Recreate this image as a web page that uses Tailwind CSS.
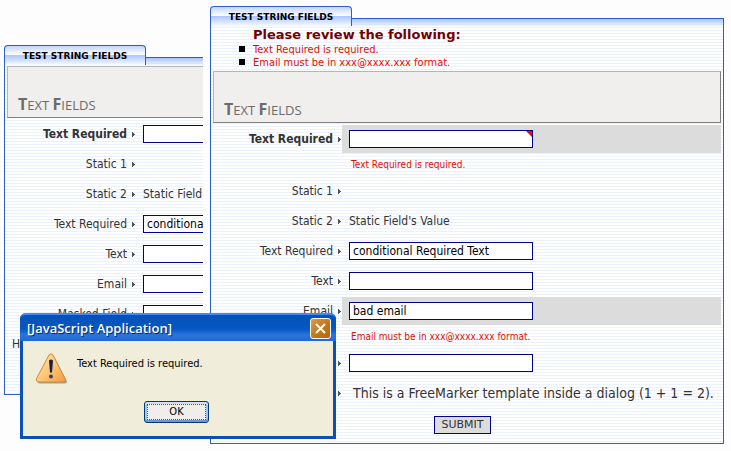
<!DOCTYPE html>
<html lang="en">
<head>
<meta charset="utf-8">
<title>Test String Fields</title>
<script src="https://cdn.jsdelivr.net/npm/@tailwindcss/browser@4"></script>
</head>
<body class="bg-[#fdfdfd] font-['DejaVu_Sans_Condensed','DejaVu_Sans',sans-serif] text-[12px] leading-4 text-[#333]">
<svg class="hidden"><defs><symbol id="arrow" viewBox="0 0 3 5"><path d="M0 0h1v1h1v1h1v1h-1v1h-1v1h-1z" fill="#555" shape-rendering="crispEdges"/></symbol></defs></svg>
<main class="flex items-start gap-[7px] pl-1 pr-[7px]">

  <section class="w-[199px] shrink-0 overflow-hidden pt-[45px]">
    <h2 class="relative -mb-2 flex h-5 w-[142px] items-center justify-center rounded-t-[4px] border border-b-0 border-[#2a5fc4] bg-[linear-gradient(#c3d5fb_0,#fff_9px,#aac6ff_9px,#fff_20px)] font-['DejaVu_Sans',sans-serif] text-[9px] font-bold text-black">TEST STRING FIELDS</h2>
    <form class="w-[514px] border border-[#2a5fc4] bg-[linear-gradient(#a9c4fb_0,#fff0_8px),repeating-linear-gradient(#fff_0_2px,#ebf2fe_2px_3px)] px-[2px] pb-[35px] pt-2">
      <h3 class="mb-px flex h-[52px] items-end border border-b-[#7f7f7f] border-l-[#b5b5b5] border-r-[#7f7f7f] border-t-[#b5b5b5] bg-[#f0efed] pb-[2px] pl-[10px] font-['Open_Sans',sans-serif] text-[13px] uppercase leading-5 text-[#6b6b6b]"><span><b class="text-[16px]">T</b>ext <b class="text-[16px]">F</b>ields</span></h3>
      <div class="flex h-[30px] items-center"><label for="a1" class="w-[120px] text-right font-bold">Text Required</label><svg class="ml-[5px] mr-[8px] h-[5px] w-[3px]"><use href="#arrow"/></svg><input id="a1" class="h-[18px] w-[184px] border border-[#000090] bg-white px-[3px] text-black"></div>
      <div class="flex h-[30px] items-center"><span class="w-[120px] text-right">Static 1</span><svg class="ml-[5px] mr-[8px] h-[5px] w-[3px]"><use href="#arrow"/></svg></div>
      <div class="flex h-[30px] items-center"><span class="w-[120px] text-right">Static 2</span><svg class="ml-[5px] mr-[8px] h-[5px] w-[3px]"><use href="#arrow"/></svg><span>Static Field's Value</span></div>
      <div class="flex h-[30px] items-center"><label for="a2" class="w-[120px] text-right">Text Required</label><svg class="ml-[5px] mr-[8px] h-[5px] w-[3px]"><use href="#arrow"/></svg><input id="a2" value="conditional Required Text" class="h-[18px] w-[184px] border border-[#000090] bg-white px-[3px] text-black"></div>
      <div class="flex h-[30px] items-center"><label for="a3" class="w-[120px] text-right">Text</label><svg class="ml-[5px] mr-[8px] h-[5px] w-[3px]"><use href="#arrow"/></svg><input id="a3" class="h-[18px] w-[184px] border border-[#000090] bg-white px-[3px] text-black"></div>
      <div class="flex h-[30px] items-center"><label for="a4" class="w-[120px] text-right">Email</label><svg class="ml-[5px] mr-[8px] h-[5px] w-[3px]"><use href="#arrow"/></svg><input id="a4" class="h-[18px] w-[184px] border border-[#000090] bg-white px-[3px] text-black"></div>
      <div class="flex h-[30px] items-center"><label for="a5" class="w-[120px] text-right">Masked Field</label><svg class="ml-[5px] mr-[8px] h-[5px] w-[3px]"><use href="#arrow"/></svg><input id="a5" class="h-[18px] w-[184px] border border-[#000090] bg-white px-[3px] text-black"></div>
      <div class="flex h-[30px] items-center pl-[5px]"><span>H</span></div>
    </form>
  </section>

  <section class="min-w-0 flex-1 pt-[6px]">
    <h2 class="relative -mb-2 flex h-5 w-[142px] items-center justify-center rounded-t-[4px] border border-b-0 border-[#2a5fc4] bg-[linear-gradient(#c3d5fb_0,#fff_9px,#aac6ff_9px,#fff_20px)] font-['DejaVu_Sans',sans-serif] text-[9px] font-bold text-black">TEST STRING FIELDS</h2>
    <form class="border border-[#2a5fc4] bg-[linear-gradient(#a9c4fb_0,#fff0_8px),repeating-linear-gradient(#fff_0_2px,#ebf2fe_2px_3px)] px-[2px] pb-[9px] pt-2">
      <div class="pb-[2px] pl-10 font-['DejaVu_Sans',sans-serif]">
        <p class="text-[13px] font-bold text-[#720000]">Please review the following:</p>
        <ul class="font-['DejaVu_Sans_Condensed',sans-serif] text-[11px] leading-[13px] text-[#e01000]">
          <li class="relative before:absolute before:-left-[14px] before:top-[3px] before:size-[6px] before:bg-black">Text Required is required.</li>
          <li class="relative before:absolute before:-left-[14px] before:top-[3px] before:size-[6px] before:bg-black">Email must be in xxx@xxxx.xxx format.</li>
        </ul>
      </div>
      <h3 class="mb-px flex h-[52px] items-end border border-b-[#7f7f7f] border-l-[#b5b5b5] border-r-[#7f7f7f] border-t-[#b5b5b5] bg-[#f0efed] pb-[2px] pl-[10px] font-['Open_Sans',sans-serif] text-[13px] uppercase leading-5 text-[#6b6b6b]"><span><b class="text-[16px]">T</b>ext <b class="text-[16px]">F</b>ields</span></h3>
      <div class="flex h-[30px] items-center"><label for="b1" class="w-[120px] text-right font-bold">Text Required</label><svg class="ml-[5px] mr-px h-[5px] w-[3px]"><use href="#arrow"/></svg><div class="flex h-7 flex-1 items-center bg-[#dcdcdc] pl-[7px]"><span class="relative flex"><input id="b1" class="h-[18px] w-[184px] border border-[#000090] bg-white px-[3px] text-black"><svg class="absolute right-px top-px size-[6px]" viewBox="0 0 6 6"><path d="M0 0h6v6z" fill="#f00"/></svg></span></div></div>
      <p class="flex h-[22px] items-center pl-[138px] text-[10px] text-[#e01000]">Text Required is required.</p>
      <div class="flex h-[30px] items-center"><span class="w-[120px] text-right">Static 1</span><svg class="ml-[5px] mr-[8px] h-[5px] w-[3px]"><use href="#arrow"/></svg></div>
      <div class="flex h-[30px] items-center"><span class="w-[120px] text-right">Static 2</span><svg class="ml-[5px] mr-[8px] h-[5px] w-[3px]"><use href="#arrow"/></svg><span>Static Field's Value</span></div>
      <div class="flex h-[30px] items-center"><label for="b2" class="w-[120px] text-right">Text Required</label><svg class="ml-[5px] mr-[8px] h-[5px] w-[3px]"><use href="#arrow"/></svg><input id="b2" value="conditional Required Text" class="h-[18px] w-[184px] border border-[#000090] bg-white px-[3px] text-black"></div>
      <div class="flex h-[30px] items-center"><label for="b3" class="w-[120px] text-right">Text</label><svg class="ml-[5px] mr-[8px] h-[5px] w-[3px]"><use href="#arrow"/></svg><input id="b3" class="h-[18px] w-[184px] border border-[#000090] bg-white px-[3px] text-black"></div>
      <div class="flex h-[30px] items-center"><label for="b4" class="w-[120px] text-right">Email</label><svg class="ml-[5px] mr-px h-[5px] w-[3px]"><use href="#arrow"/></svg><div class="flex h-7 flex-1 items-center bg-[#dcdcdc] pl-[7px]"><input id="b4" value="bad email" class="h-[18px] w-[184px] border border-[#000090] bg-white px-[3px] text-black"></div></div>
      <p class="flex h-[22px] items-center pl-[138px] text-[10px] text-[#e01000]">Email must be in xxx@xxxx.xxx format.</p>
      <div class="flex h-[30px] items-center"><svg class="ml-[125px] mr-[8px] h-[5px] w-[3px]"><use href="#arrow"/></svg><input id="b5" aria-label="Masked Field" class="h-[18px] w-[184px] border border-[#000090] bg-white px-[3px] text-black"></div>
      <div class="flex h-[30px] items-center"><svg class="ml-[125px] mr-[12px] h-[5px] w-[3px] shrink-0"><use href="#arrow"/></svg><span class="whitespace-nowrap text-[14px]">This is a FreeMarker template inside a dialog (1 + 1 = 2).</span></div>
      <div class="flex h-[26px] items-end pl-[221px]"><button type="button" class="h-[18px] w-[57px] border border-[#000090] bg-[#dcdcdc] font-['DejaVu_Sans',sans-serif] text-[11px] leading-4">SUBMIT</button></div>
    </form>
  </section>
</main>

<div role="alertdialog" aria-labelledby="dt" class="absolute left-5 top-[313px] w-[316px] rounded-t-[6px] border-b-[3px] border-l-[3px] border-r-[3px] border-[#0a50b8] bg-[#f0edda]">
  <header class="-mx-[3px] flex h-7 items-center justify-between rounded-t-[6px] border-t-2 border-[#3f8af5] bg-[linear-gradient(#0650b8_0,#0558c4_14px,#2c74dc_20px,#2368d0_26px)] pl-[7px] pr-[5px]">
    <h1 id="dt" class="font-['Open_Sans',sans-serif] text-[13px] font-semibold text-white [text-shadow:1px_1px_0_#0a2a70]">[JavaScript Application]</h1>
    <button type="button" aria-label="Close" class="flex size-[21px] items-center justify-center rounded-[3px] border border-white bg-[linear-gradient(135deg,#dc9a4c,#c47a1c_50%,#b0660a)]"><svg class="size-[11px]" viewBox="0 0 11 11"><path d="M1 1 10 10M10 1 1 10" stroke="#fff" stroke-width="2"/></svg></button>
  </header>
  <div class="flex items-start pl-3 pt-[11px]">
    <svg class="h-[33px] w-[33px] shrink-0" viewBox="0 0 33 33">
      <defs><linearGradient id="wg" x1="0" y1="0" x2="1" y2="1"><stop offset="0" stop-color="#ffe9a0"/><stop offset=".5" stop-color="#ffc878"/><stop offset="1" stop-color="#f49a3c"/></linearGradient></defs>
      <path d="M18.500 4 Q17 2 15.500 4L3 28Q2 31.500 5 31.500H29.500Q33 31.500 31.500 28.500Z" fill="#8b877c" opacity=".75"/>
      <path d="M18 3Q16 .5 14 3L1.500 26.500Q.5 30 4 30H28Q31.500 30 30 26.500Z" fill="url(#wg)" stroke="#d08a3c"/>
      <path d="M14 8.500Q16 6.500 18 8.500L17 20.500H15Z" fill="#17204c"/><circle cx="16" cy="24.500" r="2" fill="#38406a"/>
    </svg>
    <p class="pl-[9px] pt-[5px] text-[11px] leading-[14px] text-black">Text Required is required.</p>
  </div>
  <div class="flex pb-[13px] pl-[121px] pt-4"><button type="button" class="relative h-[22px] w-[65px] rounded-[3px] border border-[#003c74] bg-[#f0eeea] text-[11px] text-black shadow-[inset_0_2px_0_#cee0fb,inset_0_-2px_0_#6f94d8,inset_2px_0_0_#a8c4ee,inset_-2px_0_0_#a8c4ee] after:absolute after:inset-[2px] after:border after:border-dotted after:border-[#555]">OK</button></div>
</div>
</body>
</html>
